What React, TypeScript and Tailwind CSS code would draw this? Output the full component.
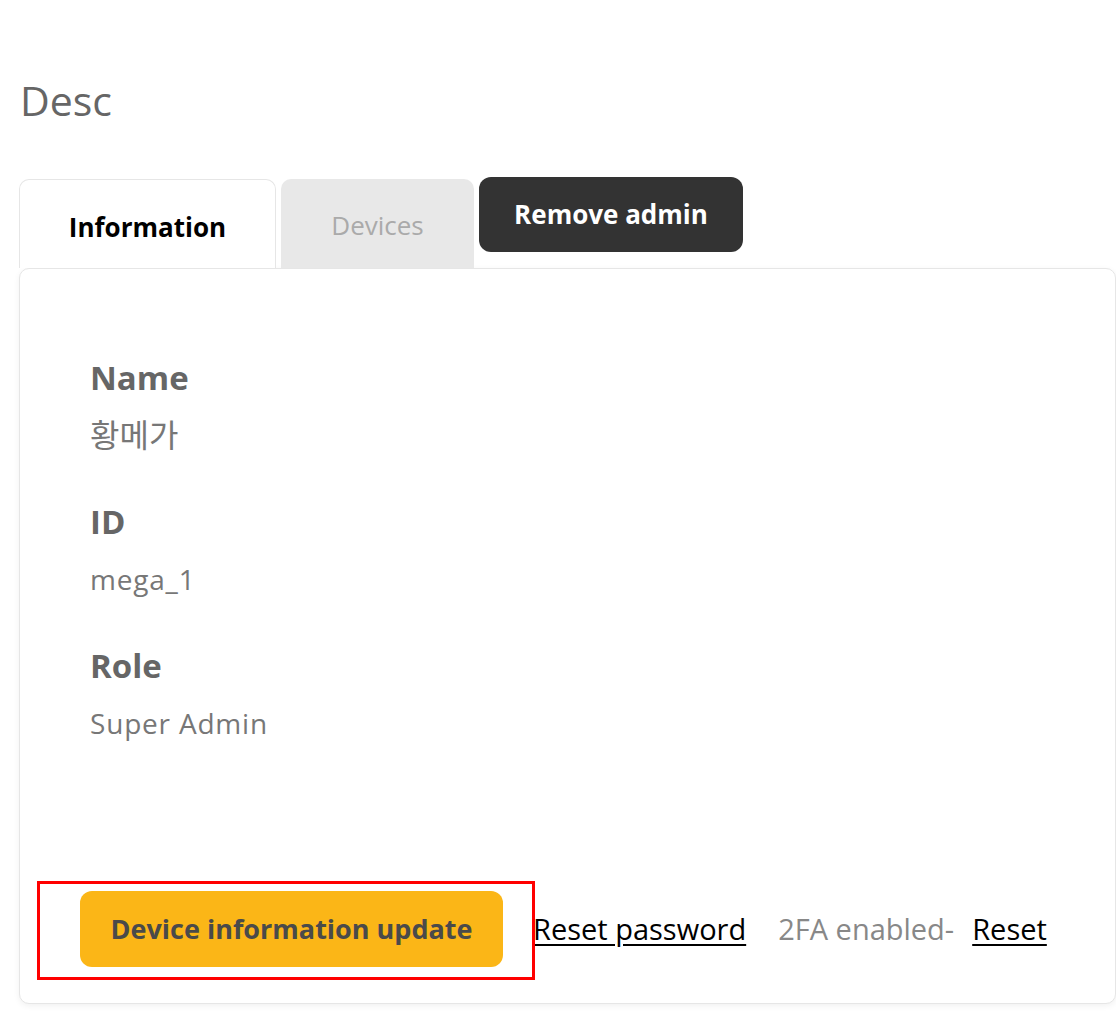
import React from "react";

type Field = { label: string; value: string; valueClass: string };

const fields: Field[] = [
  { label: "Name", value: "황메가", valueClass: "text-[32px]" },
  { label: "ID", value: "mega_1", valueClass: "text-[28px] tracking-[0.8px]" },
  { label: "Role", value: "Super Admin", valueClass: "text-[28px] tracking-[0.8px]" },
];

export default function App() {
  return (
    <div className="min-h-screen bg-white pl-[19px] pt-[72px] font-['Open_Sans','Noto_Sans_CJK_KR',sans-serif]">
      <h1 className="ml-[1px] text-[41px] leading-[56px] text-[#666]">Desc</h1>

      <div className="mt-[51px] flex items-start">
        <button
          type="button"
          className="flex h-[89px] w-[257px] items-center justify-center rounded-t-[10px] border border-b-0 border-[#e6e6e6] bg-white pt-[6px] text-[26px] font-bold text-black"
        >
          Information
        </button>
        <button
          type="button"
          className="ml-[5px] flex h-[89px] w-[193px] items-center justify-center rounded-t-[10px] bg-[#e8e8e8] pt-[4px] text-[26px] text-[#aaa]"
        >
          Devices
        </button>
        <button
          type="button"
          className="ml-[5px] mt-[-2px] flex h-[75px] w-[264px] items-center justify-center rounded-[12px] bg-[#333] text-[26px] font-bold text-white"
        >
          Remove admin
        </button>
      </div>

      <div className="flex h-[736px] flex-col rounded-[10px] border border-[#e6e6e6] bg-white pt-[89px] pb-[36px] shadow-[0_2px_6px_rgba(0,0,0,0.06)]">
        <div className="pl-[70px]">
          {fields.map((f, i) => (
            <div key={f.label} className={i === 0 ? "" : "mt-[47px]"}>
              <div className="text-[33px] font-bold leading-[40px] text-[#666]">{f.label}</div>
              <div className={`mt-[17px] leading-[40px] text-[#777] ${f.valueClass}`}>{f.value}</div>
            </div>
          ))}
        </div>

        <div className="mt-auto flex items-center pl-[60px] text-[29px]">
          <div className="relative">
            <button
              type="button"
              className="flex h-[76px] w-[423px] items-center justify-center rounded-[12px] bg-[#fbb617] text-[27px] font-bold text-[#4a4a4a]"
            >
              Device information update
            </button>
            <div className="pointer-events-none absolute -left-[43px] -right-[32px] -top-[10px] -bottom-[13px] border-[3px] border-[#ff0000]" />
          </div>
          <a href="#" className="ml-[30px] text-black underline underline-offset-[4px]">
            Reset password
          </a>
          <span className="ml-[32px] text-[#888]">2FA enabled-</span>
          <a href="#" className="ml-[18px] text-black underline underline-offset-[4px]">
            Reset
          </a>
        </div>
      </div>
    </div>
  );
}
